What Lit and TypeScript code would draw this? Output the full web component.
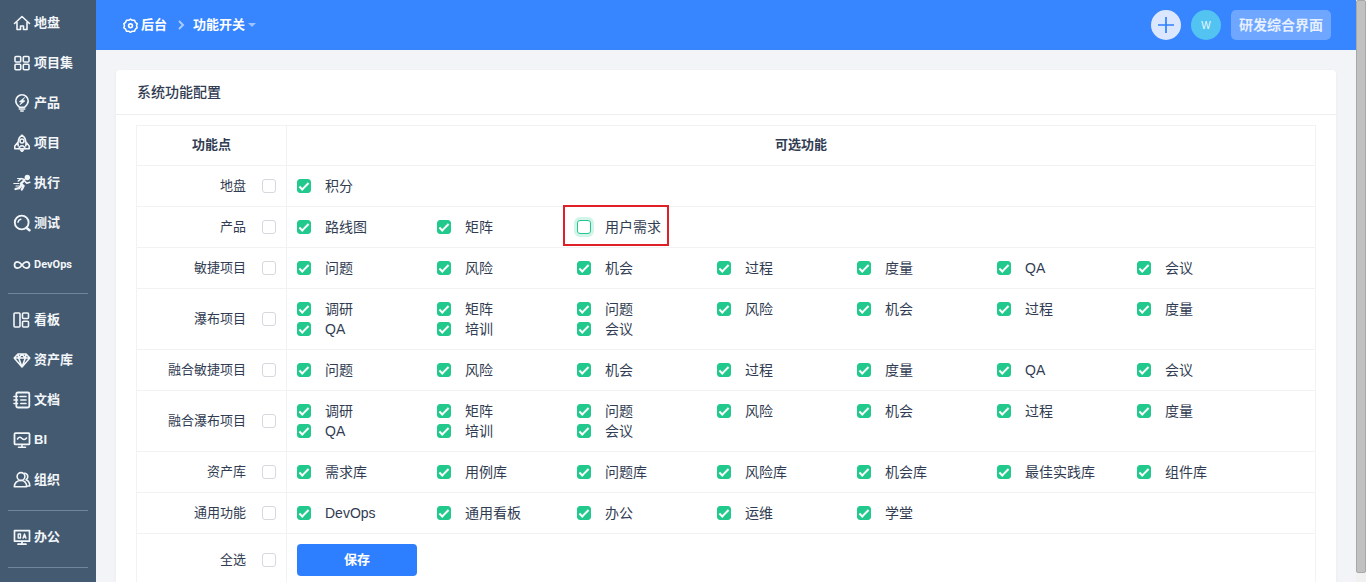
import { LitElement, html, svg, css } from "lit";
import { customElement, property, state } from "lit/decorators.js";

const icons: Record<string, unknown> = {
  home: svg`<path d="M1.500 9.500 9 2.500l7.500 7M4 8.500v7h3.500v-3.500h3v3.500H14v-7"/>`,
  grid: svg`<rect x="2" y="2.500" width="5.700" height="5.500" rx="1"/><rect x="10.300" y="2.500" width="5.700" height="5.500" rx="1"/><rect x="2" y="10.300" width="5.700" height="5.500" rx="1"/><rect x="10.300" y="10.300" width="5.700" height="5.500" rx="1"/>`,
  bulb: svg`<path d="M6.300 13.200C4.500 11.500 2.800 9.700 2.800 7a6.200 6.200 0 0 1 12.400 0c0 2.700-1.700 4.500-3.500 6.200zM6.300 15h5.400M7.800 17h2.400"/><path d="m11.500 3.600-5.200 4.100 2.200.5-1.700 2.700 5.200-4-2.100-.6z" fill="currentColor" stroke-width=".6"/>`,
  rocket: svg`<path d="M5.200 12C4.500 7.500 5.500 3.700 9 1.200c3.500 2.500 4.500 6.300 3.800 10.800M4.700 8.500 1.800 12v2.700h14.400V12l-2.900-3.500"/><circle cx="9" cy="7" r="2"/><path d="M6 14.700c.4-2 1.400-3 3-3s2.600 1 3 3"/><path d="M7.600 16h2.800L9 17.500z" fill="currentColor"/>`,
  run: svg`<circle cx="14.300" cy="3.500" r="1.900" fill="currentColor"/><path d="m11.300 6.200-3.500 3.600 2.800 2.200-1.800 3.500M8.500 11 6 14.200 2.500 15" stroke-width="2.300"/><path d="M11.500 5.600 8 4.600 5.300 7M12 7.500l1.800 1.700 3-1" /><path d="M.8 9.500h5M3 12h3M4.500 4.500H7" stroke-width="1.200"/>`,
  search: svg`<circle cx="8.700" cy="8.500" r="6.900" stroke-width="1.900"/><path d="m13.300 13.700 3.200 2.600" stroke-width="2.400"/><path d="M5 8.200A3.600 3.600 0 0 1 7.800 5.200"/>`,
  infinity: svg`<path d="M9 9C7.500 6.900 6.500 5.800 4.700 5.800a3.200 3.200 0 0 0 0 6.400C6.500 12.200 7.500 11.100 9 9s2.500-3.200 4.300-3.200a3.200 3.200 0 0 1 0 6.400C11.500 12.200 10.500 11.100 9 9z" stroke-width="1.700"/>`,
  board: svg`<rect x="1" y="2" width="6" height="14" rx="1"/><rect x="9.500" y="2" width="6" height="5.500" rx="1"/><rect x="9.500" y="10.200" width="6" height="5.800" rx="1"/>`,
  gem: svg`<path d="M5 3h8l3.800 4L9 16 1.200 7zM1.200 7h15.600M5.700 7 9 16l3.300-9L9 3zM5 3l.7 4M13 3l-.7 4"/>`,
  doc: svg`<rect x="3.300" y="1.500" width="13" height="15" rx="1.500" stroke-width="1.800"/><path d="M7 5.500h6M7.800 9H13M7.800 12.500H13M1 5.500h3.500M1 9h3.500M1 12.500h3.500"/>`,
  monitor: svg`<rect x="1.500" y="2.200" width="15" height="11.200" rx="1" stroke-width="1.800"/><path d="M4.500 8c1.500-2.500 3-2 4.500-.5s3 1.500 4.500-.5M9 13.500V16M5.500 16.200h7"/>`,
  people: svg`<circle cx="8" cy="5.500" r="3.900"/><path d="M1.300 15.800c.3-4.200 2.800-6.300 6.700-6.300s5.500 2.100 5.700 6.300zM11.500 2.200c3.500.2 4.400 4.500 1.600 6.500 2.400 1 3.600 3.200 3.700 6.300h-2"/>`,
  office: svg`<path d="M1.500 2.700h15v10.500h-15zM9 13.500V16M5 16.200h8" stroke-width="1.700"/><path d="M5.200 6h2.300v4H5.200zM10 10.200 11.500 6 13 10.200M10.500 9h2" stroke-width="1.400"/>`,
  gear: svg`<path d="m9 1.300 2.200 1.500 2.700-.1.900 2.500 2.200 1.600L16.200 9.400l.8 2.400-2.200 1.600-.9 2.500-2.700-.1L9 17.300l-2.200-1.500-2.700.1-.9-2.500L1 11.800l.8-2.400L1 6.800l2.200-1.600.9-2.500 2.700.1z" stroke-width="1.800"/><circle cx="9" cy="9.300" r="2.300" stroke-width="1.900"/>`,
};

const icon = (name: string, size = 18) => html`<svg
  width=${size} height=${size} viewBox="0 0 18 18" fill="none" stroke="currentColor"
  stroke-width="1.600" stroke-linecap="round" stroke-linejoin="round" aria-hidden="true"
>${icons[name]}</svg>`;

const menu: [string, string][][] = [
  [["home", "地盘"], ["grid", "项目集"], ["bulb", "产品"], ["rocket", "项目"], ["run", "执行"], ["search", "测试"], ["infinity", "DevOps"]],
  [["board", "看板"], ["gem", "资产库"], ["doc", "文档"], ["monitor", "BI"], ["people", "组织"]],
  [["office", "办公"]],
];

interface Feature { name: string; on: boolean; marked?: boolean }
interface Group { name: string; features: Feature[] }

const on = (names: string): Feature[] => names.split(" ").map((name) => ({ name, on: true }));

@customElement("side-menu")
class SideMenu extends LitElement {
  static styles = css`
    :host { display: block; flex: none; width: 96px; box-sizing: border-box; padding-top: 3px; background: #435a71; }
    .group { border-bottom: 1px solid #71859a; margin: 0 8px 6px; padding: 0 0 10px; list-style: none; }
    .link { display: flex; align-items: center; gap: 3px; box-sizing: border-box; height: 40px; padding-left: 5px; color: #f3f6f9; font-size: 13px; line-height: 20px; font-weight: 700; text-decoration: none; white-space: nowrap; }
    .latin { padding-top: 3px; font-family: Roboto, sans-serif; font-size: 11px; }
  `;
  render() {
    return html`<nav>${menu.map((group) => html`<ul class="group">${group.map(([glyph, label]) => html`
      <li><a class="link ${label === "DevOps" ? "latin" : ""}" href="#">${icon(glyph)}<span>${label}</span></a></li>`)}</ul>`)}</nav>`;
  }
}

@customElement("top-bar")
class TopBar extends LitElement {
  static styles = css`
    :host { display: flex; align-items: center; justify-content: space-between; height: 50px; padding: 0 25px 0 27px; background: #3785ff; color: #fff; box-sizing: border-box; }
    .crumbs, .tools { display: flex; align-items: center; }
    .crumb { display: flex; align-items: center; gap: 3px; color: #fff; font-family: inherit; font-size: 13px; font-weight: 700; line-height: 20px; text-decoration: none; border: 0; padding: 0; background: none; }
    .sep { margin: 0 8px 0 10px; color: #a9cbff; }
    .caret { width: 0; border: 4px solid transparent; border-top-color: #9cc3ff; border-bottom: 0; }
    .tools { gap: 10px; }
    .add { display: grid; place-items: center; width: 30px; height: 30px; border: 0; padding: 0; border-radius: 50%; background: #dae7ff; color: #2f80ff; }
    .avatar { display: grid; place-items: center; width: 30px; height: 30px; border-radius: 50%; background: #53c4f2; color: #e9f8ff; font-size: 10px; }
    .switch { height: 30px; padding: 0 8px; border: 0; border-radius: 5px; background: #6fa6ff; color: #e6efff; font-family: inherit; font-size: 14px; line-height: 20px; font-weight: 700; }
  `;
  render() {
    return html`
      <nav class="crumbs">
        <a class="crumb" href="#">${icon("gear", 15)}<span>后台</span></a>
        <svg class="sep" width="8" height="10" viewBox="0 0 8 10" fill="none" stroke="currentColor" stroke-width="2" aria-hidden="true"><path d="m2 1 4 4-4 4"/></svg>
        <button class="crumb"><span>功能开关</span><span class="caret"></span></button>
      </nav>
      <div class="tools">
        <button class="add" aria-label="+"><svg width="18" height="18" viewBox="0 0 18 18" stroke="currentColor" stroke-width="1.700" aria-hidden="true"><path d="M9 1v16M1 9h16"/></svg></button>
        <span class="avatar">W</span>
        <button class="switch">研发综合界面</button>
      </div>`;
  }
}

@customElement("feature-table")
class FeatureTable extends LitElement {
  @property({ attribute: false }) groups: Group[] = [];

  static styles = css`
    :host { display: block; }
    .table { width: 100%; border-spacing: 0; border-right: 1px solid #f1f2f4; table-layout: fixed; }
    .head, .name, .cell { box-sizing: border-box; border-top: 1px solid #f1f2f4; border-left: 1px solid #f1f2f4; padding: 10px; font-size: 13px; line-height: 20px; }
    .head { height: 40px; padding: 9px 10px 10px; font-weight: 700; }
    .head-name { width: 150px; }
    .name { font-weight: 400; }
    .cell { font-size: 14px; }
    .pick { display: flex; justify-content: flex-end; align-items: center; gap: 16px; }
    .list { display: flex; flex-wrap: wrap; }
    .slot { flex: 0 0 140px; display: flex; }
    .item { position: relative; display: flex; align-items: center; gap: 14px; }
    .box { appearance: none; display: grid; place-items: center; box-sizing: border-box; width: 14px; height: 14px; margin: 0; border: 1px solid #d5d8dc; border-radius: 3px; background: #fff; }
    .box:checked { border-color: #22c98d; background: #22c98d; }
    .box:checked::after { content: ""; box-sizing: content-box; width: 8px; height: 3px; border: solid #fff; border-width: 0 0 2px 2px; transform: translateY(-1px) rotate(-45deg); }
    .marked .box { border-color: #22c98d; box-shadow: 0 0 0 3px #d3f4e8; }
    .marked::after { content: ""; position: absolute; inset: -12px -8px -9px -14px; border: 2px solid #e02027; }
    .save { display: block; width: 120px; height: 32px; border: 0; border-radius: 4px; background: #2e7fff; color: #fff; font-family: inherit; font-size: 13px; line-height: 20px; font-weight: 700; }
  `;
  render() {
    const pick = (name: string) => html`<th class="name" scope="row"><label class="pick">${name}<input class="box" type="checkbox" /></label></th>`;
    return html`<table class="table">
      <thead><tr><th class="head head-name" scope="col">功能点</th><th class="head" scope="col">可选功能</th></tr></thead>
      <tbody>
        ${this.groups.map((g) => html`<tr>${pick(g.name)}<td class="cell"><div class="list">${g.features.map((f) => html`
          <div class="slot"><label class="item ${f.marked ? "marked" : ""}"><input class="box" type="checkbox" .checked=${f.on} />${f.name}</label></div>`)}</div></td></tr>`)}
        <tr>${pick("全选")}<td class="cell"><button class="save">保存</button></td></tr>
      </tbody>
    </table>`;
  }
}

@customElement("app-root")
class AppRoot extends LitElement {
  @state() private groups: Group[] = [
    { name: "地盘", features: on("积分") },
    { name: "产品", features: [...on("路线图 矩阵"), { name: "用户需求", on: false, marked: true }] },
    { name: "敏捷项目", features: on("问题 风险 机会 过程 度量 QA 会议") },
    { name: "瀑布项目", features: on("调研 矩阵 问题 风险 机会 过程 度量 QA 培训 会议") },
    { name: "融合敏捷项目", features: on("问题 风险 机会 过程 度量 QA 会议") },
    { name: "融合瀑布项目", features: on("调研 矩阵 问题 风险 机会 过程 度量 QA 培训 会议") },
    { name: "资产库", features: on("需求库 用例库 问题库 风险库 机会库 最佳实践库 组件库") },
    { name: "通用功能", features: on("DevOps 通用看板 办公 运维 学堂") },
  ];

  static styles = css`
    :host { display: flex; height: 100vh; overflow: hidden; background: #f3f4f7; color: #313c52; font-family: "Liberation Sans", "Noto Sans CJK SC", sans-serif; }
    .main { flex: 1; min-width: 0; }
    .card { margin: 20px; border-radius: 4px; background: #fff; box-shadow: 0 1px 3px rgba(40, 50, 70, .06); }
    .title { margin: 0; padding: 12px 21px; border-bottom: 1px solid #eceef0; font-size: 14px; line-height: 20px; font-weight: 500; }
    .body { padding: 10px 20px; }
    .track { flex: none; width: 10px; background: #f1f1f1; }
    .thumb { box-sizing: border-box; height: calc(100% - 9px); border: 1px solid #a8a8a8; border-radius: 2px; background: #c1c1c1; }
  `;
  render() {
    return html`
      <side-menu></side-menu>
      <main class="main">
        <top-bar></top-bar>
        <section class="card">
          <h1 class="title">系统功能配置</h1>
          <div class="body"><feature-table .groups=${this.groups}></feature-table></div>
        </section>
      </main>
      <div class="track"><div class="thumb"></div></div>`;
  }
}
